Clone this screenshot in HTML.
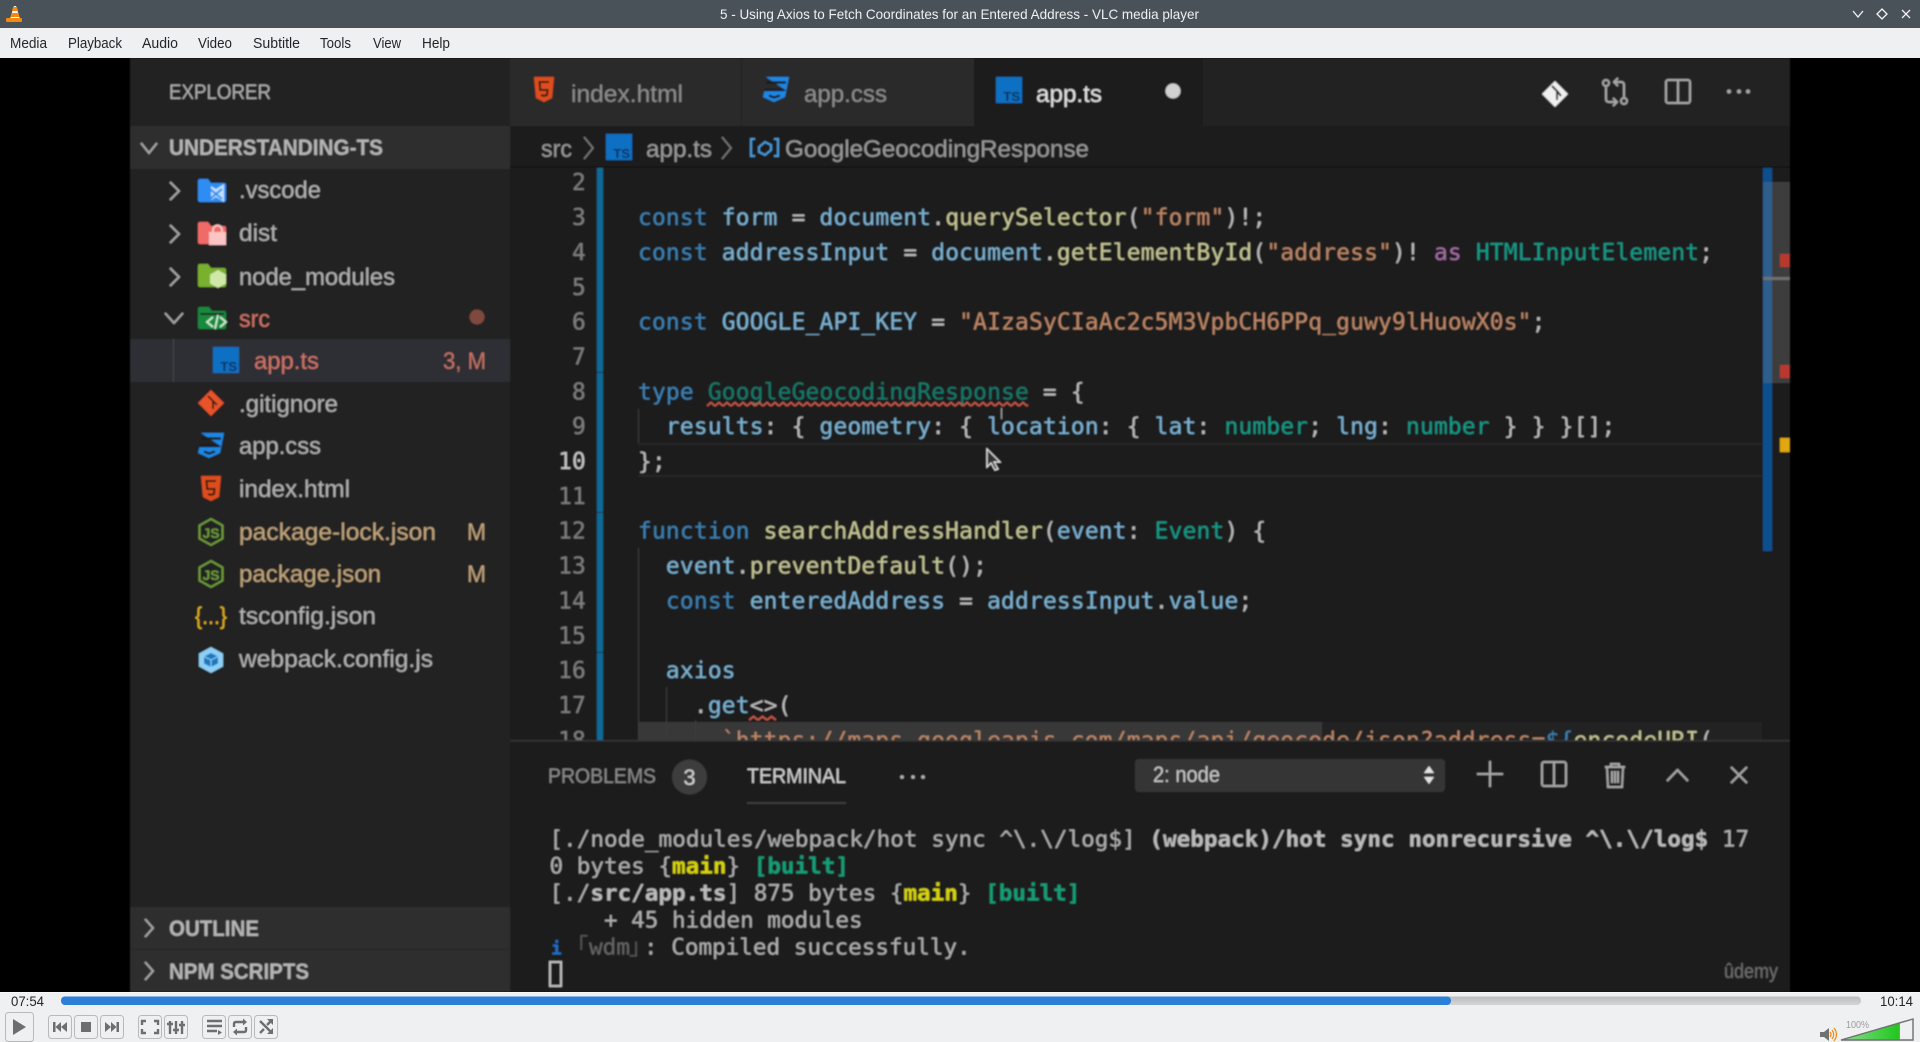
<!DOCTYPE html>
<html lang="en"><head><meta charset="utf-8"><title>VLC media player</title>
<style>
html,body{margin:0;padding:0;width:1920px;height:1042px;overflow:hidden;background:#eff0f1}
svg{display:block;position:absolute;left:0;top:0}
text{white-space:pre}
.ui{font-family:"Liberation Sans",sans-serif}
.m{font-family:"DejaVu Sans Mono","Liberation Mono",monospace;font-size:22.87px;letter-spacing:.2px}
.t{font-family:"DejaVu Sans Mono","Liberation Mono","Noto Sans CJK JP",monospace;font-size:22.62px;fill:#b0b0b0}
.ln{text-anchor:end;fill:#7f7f7f}
.f{font-family:"Liberation Sans",sans-serif;font-size:24px;fill:#b2b2b2}
.k{fill:#3d82b4}.v{fill:#7db4d4}.fn{fill:#c6c696}.s{fill:#bd8768}.ty{fill:#159b89}.p{fill:#bdbdbd}
.menu{font-family:"Liberation Sans",sans-serif;font-size:15px;fill:#232629}
.btn{fill:#eff0f1;stroke:#b9babb;stroke-width:1}
.ic{fill:#6d6e6f}
.ics{fill:none;stroke:#6d6e6f;stroke-width:2.4}
.w{fill:none;stroke:#a8a8a8;stroke-width:2}
</style></head>
<body>
<svg width="1920" height="1042" viewBox="0 0 1920 1042" xmlns="http://www.w3.org/2000/svg">
<defs>
<filter id="b" filterUnits="userSpaceOnUse" x="0" y="58" width="1920" height="934"><feGaussianBlur stdDeviation="0.8"/></filter>
<pattern id="sq" patternUnits="userSpaceOnUse" width="8" height="7" x="707" y="401"><path d="M0 5 L4 1.5 L8 5" fill="none" stroke="#c8584a" stroke-width="1.6"/></pattern>
<pattern id="sq2" patternUnits="userSpaceOnUse" width="9" height="7" x="749" y="715"><path d="M0 5 L4.5 1.5 L9 5" fill="none" stroke="#c8584a" stroke-width="1.8"/></pattern>
<linearGradient id="vol" x1="0" x2="1" y1="0" y2="0"><stop offset="0" stop-color="#8fdc8f"/><stop offset=".97" stop-color="#1fc81f"/><stop offset="1" stop-color="#8cae10"/></linearGradient>
<linearGradient id="track" x1="0" x2="0" y1="0" y2="1"><stop offset="0" stop-color="#bcbdbe"/><stop offset="1" stop-color="#d4d5d6"/></linearGradient>
<g id="ts"><rect width="26" height="26" fill="#0b6fc2"/><text x="24" y="24" text-anchor="end" class="ui" font-size="13" font-weight="bold" fill="#0c2f55">TS</text></g>
<g id="html5"><path d="M0 0H20L18 21L10 25L2 21Z" fill="#df4d1f"/><path d="M15 5H5.5L6.2 13H13.5L13 18L10 19L7 18" fill="none" stroke="#2a1a14" stroke-width="2"/></g>
<g id="css3"><path d="M3 0H26L22 20L11 25L0 20L1.5 14H24" fill="#1e88e5"/><path d="M3 5.5H23M1.5 13H21M6 18.5L11 20.5L17 18.5" stroke="#1f1f1f" stroke-width="2.4" fill="none"/></g>
<g id="js"><path d="M0-13L11.5-6.5V6.5L0 13L-11.5 6.5V-6.5Z" fill="none" stroke="#6d9c3a" stroke-width="2"/><text x="0" y="6" text-anchor="middle" class="ui" font-size="14" font-weight="bold" fill="#6d9c3a">JS</text></g>
</defs>

<!-- VIDEO -->
<rect x="0" y="58" width="1920" height="934" fill="#000"/>
<g filter="url(#b)">
<!-- sidebar -->
<rect x="130" y="58" width="380" height="934" fill="#212121"/>
<text x="169" y="99" class="ui" font-size="21" fill="#aeaeae" textLength="102" lengthAdjust="spacingAndGlyphs">EXPLORER</text>
<rect x="130" y="126" width="380" height="43" fill="#2e2e2e"/>
<path d="M141 143L149 153L157 143" class="w"/>
<text x="169" y="155" class="ui" font-size="22" font-weight="bold" fill="#b5b5b5" textLength="214" lengthAdjust="spacingAndGlyphs">UNDERSTANDING-TS</text>

<path d="M170 182L179 191L170 200M170 225L179 234L170 243M170 268L179 277L170 286" class="w"/>
<path d="M165 313L174 323L183 313" class="w"/>
<!-- folders -->
<path d="M198 181a2 2 0 0 1 2-2h8l3 4h13a2 2 0 0 1 2 2v15a2 2 0 0 1-2 2h-24a2 2 0 0 1-2-2z" fill="#2e8df2"/>
<path d="M216 189l8-5v18l-8-5-5 3v-14z" fill="#bfe0ff"/><path d="M210 189l12 10M210 199l12-10" stroke="#2e8df2" stroke-width="2"/>
<path d="M198 224a2 2 0 0 1 2-2h8l3 4h13a2 2 0 0 1 2 2v14a2 2 0 0 1-2 2h-24a2 2 0 0 1-2-2z" fill="#f06a68"/>
<rect x="209" y="232" width="17" height="13" fill="#fcc5c5"/><path d="M213 232v-2a4 4 0 0 1 9 0v2" fill="none" stroke="#fcc5c5" stroke-width="2"/>
<path d="M198 266a2 2 0 0 1 2-2h8l3 4h13a2 2 0 0 1 2 2v15a2 2 0 0 1-2 2h-24a2 2 0 0 1-2-2z" fill="#79b02f"/>
<path d="M218 270l8 4.5v9l-8 4.5-8-4.5v-9z" fill="#cfe8a8"/>
<path d="M198 309a2 2 0 0 1 2-2h9l3 4h12a2 2 0 0 1 2 2v14a2 2 0 0 1-2 2h-24a2 2 0 0 1-2-2z" fill="#128a3c"/>
<rect x="200" y="313" width="24" height="2" fill="#222"/>
<path d="M213 317l-6 5 6 5M220 317l6 5-6 5M218 315l-3 14" fill="none" stroke="#cdeed6" stroke-width="1.8"/>
<!-- rows -->
<text x="239" y="198" class="f" textLength="82" lengthAdjust="spacingAndGlyphs">.vscode</text>
<text x="239" y="241" class="f" textLength="38" lengthAdjust="spacingAndGlyphs">dist</text>
<text x="239" y="285" class="f" textLength="156" lengthAdjust="spacingAndGlyphs">node_modules</text>
<text x="239" y="327" class="f" style="fill:#cf7568" textLength="31" lengthAdjust="spacingAndGlyphs">src</text>
<circle cx="477" cy="317" r="7.5" fill="#7f4a40"/>
<rect x="130" y="339" width="380" height="43" fill="#2f2f34"/>
<rect x="173" y="339" width="1" height="43" fill="#4a4a4a"/>
<use href="#ts" x="213" y="347"/>
<text x="254" y="369" class="f" style="fill:#cf7568" textLength="65" lengthAdjust="spacingAndGlyphs">app.ts</text>
<text x="443" y="369" class="f" style="fill:#c27365" textLength="43" lengthAdjust="spacingAndGlyphs">3, M</text>
<path d="M211 390l13 13-13 13-13-13z" fill="#e9532b"/><path d="M208 396l5 5v8M213 401l4 4" stroke="#221" stroke-width="1.8" fill="none"/>
<text x="239" y="412" class="f" textLength="99" lengthAdjust="spacingAndGlyphs">.gitignore</text>
<use href="#css3" x="198" y="433"/>
<text x="239" y="454" class="f" textLength="82" lengthAdjust="spacingAndGlyphs">app.css</text>
<use href="#html5" x="201" y="476"/>
<text x="239" y="497" class="f" textLength="111" lengthAdjust="spacingAndGlyphs">index.html</text>
<use href="#js" x="211" y="532"/>
<text x="239" y="540" class="f" style="fill:#c2a57c" textLength="197" lengthAdjust="spacingAndGlyphs">package-lock.json</text>
<text x="467" y="540" class="f" style="fill:#c2a57c" textLength="19" lengthAdjust="spacingAndGlyphs">M</text>
<use href="#js" x="211" y="574"/>
<text x="239" y="582" class="f" style="fill:#c2a57c" textLength="142" lengthAdjust="spacingAndGlyphs">package.json</text>
<text x="467" y="582" class="f" style="fill:#c2a57c" textLength="19" lengthAdjust="spacingAndGlyphs">M</text>
<text x="195" y="624" class="ui" font-size="24" fill="#e6b41e" textLength="32" lengthAdjust="spacingAndGlyphs">{...}</text>
<text x="239" y="624" class="f" textLength="137" lengthAdjust="spacingAndGlyphs">tsconfig.json</text>
<path d="M211 647l12 6.5v13l-12 6.5-12-6.5v-13z" fill="#8ed0f5"/><path d="M211 653l7 3.5v7l-7 3.5-7-3.5v-7z" fill="#1c78c0"/><path d="M204 656.500l7 3.500 7-3.500M211 660v7" fill="none" stroke="#8ed0f5" stroke-width="1"/>
<text x="239" y="667" class="f" textLength="194" lengthAdjust="spacingAndGlyphs">webpack.config.js</text>
<rect x="130" y="907" width="380" height="43" fill="#2d2d2d"/>
<rect x="130" y="950" width="380" height="42" fill="#2d2d2d"/>
<rect x="130" y="949" width="380" height="1" fill="#262626"/>
<path d="M145 919l8 9-8 9M145 962l8 9-8 9" class="w"/>
<text x="169" y="936" class="ui" font-size="22" font-weight="bold" fill="#b5b5b5" textLength="90" lengthAdjust="spacingAndGlyphs">OUTLINE</text>
<text x="169" y="979" class="ui" font-size="22" font-weight="bold" fill="#b5b5b5" textLength="140" lengthAdjust="spacingAndGlyphs">NPM SCRIPTS</text>

<!-- tabs -->
<rect x="510" y="58" width="1280" height="68" fill="#212121"/>
<rect x="510" y="58" width="231" height="68" fill="#2a2a2a"/>
<rect x="742" y="58" width="232" height="68" fill="#2a2a2a"/>
<rect x="974" y="58" width="229" height="68" fill="#1c1c1c"/>
<use href="#html5" x="534" y="77"/>
<text x="571" y="102" class="ui" font-size="24" fill="#8d8d8d" textLength="112" lengthAdjust="spacingAndGlyphs">index.html</text>
<use href="#css3" x="763" y="77"/>
<text x="804" y="102" class="ui" font-size="24" fill="#8d8d8d" textLength="83" lengthAdjust="spacingAndGlyphs">app.css</text>
<use href="#ts" x="996" y="77"/>
<text x="1036" y="102" class="ui" font-size="24" fill="#e4e4e4" textLength="66" lengthAdjust="spacingAndGlyphs">app.ts</text>
<circle cx="1173" cy="91" r="7.5" fill="#d0d0d0"/>
<!-- top-right icons -->
<path d="M1555 81l13 13-13 13-13-13z" fill="#f0f0f0"/><path d="M1552 86l5 5v9M1557 91l4 5" stroke="#222" stroke-width="2" fill="none"/>
<g class="w"><circle cx="1606" cy="83" r="3"/><circle cx="1624" cy="101" r="3"/><path d="M1606 87v12q0 3 3 3h8M1613 98l4 4-4 4M1624 97v-12q0-3-3-3h-6M1618 78l-4 4 4 4" fill="none"/>
<rect x="1666" y="80" width="24" height="23" rx="2"/><path d="M1678 80v23"/></g>
<g fill="#a8a8a8"><circle cx="1729" cy="91.500" r="2"/><circle cx="1739" cy="91.500" r="2"/><circle cx="1748" cy="91.500" r="2"/></g>

<!-- breadcrumb -->
<rect x="510" y="126" width="1280" height="42" fill="#1c1c1c"/>
<rect x="510" y="166" width="1280" height="3" fill="#161616"/>
<text x="541" y="157" class="ui" font-size="24" fill="#9a9a9a" textLength="31" lengthAdjust="spacingAndGlyphs">src</text>
<path d="M584 137l9 11-9 11M722 137l9 11-9 11" fill="none" stroke="#7d7d7d" stroke-width="1.5"/>
<use href="#ts" x="606" y="134"/>
<text x="646" y="157" class="ui" font-size="24" fill="#9a9a9a" textLength="66" lengthAdjust="spacingAndGlyphs">app.ts</text>
<path d="M755 139h-4v17h4M774 139h4v17h-4" fill="none" stroke="#4a9ad8" stroke-width="2"/>
<path d="M759 147l6-5 6 3v5l-6 5-6-3z" fill="none" stroke="#4a9ad8" stroke-width="2"/>
<text x="785" y="157" class="ui" font-size="24" fill="#9a9a9a" textLength="304" lengthAdjust="spacingAndGlyphs">GoogleGeocodingResponse</text>

<!-- editor -->
<rect x="510" y="168" width="1280" height="572" fill="#1c1c1c"/>
<rect x="597" y="168" width="6" height="572" fill="#0b6b97"/>
<rect x="597" y="372" width="6" height="1" fill="#1c1c1c"/><rect x="597" y="512" width="6" height="1" fill="#1c1c1c"/><rect x="597" y="652" width="6" height="1" fill="#1c1c1c"/>
<rect x="638" y="443" width="1124" height="2" fill="#262626"/><rect x="638" y="475" width="1124" height="2" fill="#262626"/>
<rect x="638" y="722" width="684" height="18" fill="#383838"/>
<rect x="1322" y="722" width="440" height="18" fill="#242424"/>
<g fill="#3a3a3a"><rect x="638" y="409" width="1" height="34"/><rect x="638" y="548" width="1" height="192"/><rect x="666" y="687" width="1" height="53"/><rect x="695" y="720" width="1" height="20"/></g>
<g class="m">
<text class="ln" x="586" y="190.2">2</text>
<text class="ln" x="586" y="225.1">3</text>
<text class="ln" x="586" y="260">4</text>
<text class="ln" x="586" y="294.8">5</text>
<text class="ln" x="586" y="329.7">6</text>
<text class="ln" x="586" y="364.500">7</text>
<text class="ln" x="586" y="399.300">8</text>
<text class="ln" x="586" y="434.200">9</text>
<text class="ln" x="586" y="469" style="fill:#c8c8c8">10</text>
<text class="ln" x="586" y="503.900">11</text>
<text class="ln" x="586" y="538.700">12</text>
<text class="ln" x="586" y="573.600">13</text>
<text class="ln" x="586" y="608.400">14</text>
<text class="ln" x="586" y="643.300">15</text>
<text class="ln" x="586" y="678.100">16</text>
<text class="ln" x="586" y="713">17</text>
<text class="ln" x="586" y="747.800">18</text>

<text x="638" y="225.1" xml:space="preserve"><tspan class="k">const</tspan><tspan class="v"> form </tspan><tspan class="p">=</tspan><tspan class="v"> document</tspan><tspan class="p">.</tspan><tspan class="fn">querySelector</tspan><tspan class="p">(</tspan><tspan class="s">"form"</tspan><tspan class="p">)!;</tspan></text>
<text x="638" y="260" xml:space="preserve"><tspan class="k">const</tspan><tspan class="v"> addressInput </tspan><tspan class="p">=</tspan><tspan class="v"> document</tspan><tspan class="p">.</tspan><tspan class="fn">getElementById</tspan><tspan class="p">(</tspan><tspan class="s">"address"</tspan><tspan class="p">)! </tspan><tspan fill="#a56ea5">as</tspan><tspan class="ty"> HTMLInputElement</tspan><tspan class="p">;</tspan></text>
<text x="638" y="329.7" xml:space="preserve"><tspan class="k">const</tspan><tspan class="v"> GOOGLE_API_KEY </tspan><tspan class="p">= </tspan><tspan class="s">"AIzaSyCIaAc2c5M3VpbCH6PPq_guwy9lHuowX0s"</tspan><tspan class="p">;</tspan></text>
<text x="638" y="399.300" xml:space="preserve"><tspan class="k">type</tspan><tspan fill="#157a6c"> GoogleGeocodingResponse</tspan><tspan class="p"> = {</tspan></text>
<text x="638" y="434.200" xml:space="preserve"><tspan class="v">  results</tspan><tspan class="p">: { </tspan><tspan class="v">geometry</tspan><tspan class="p">: { </tspan><tspan class="v">location</tspan><tspan class="p">: { </tspan><tspan class="v">lat</tspan><tspan class="p">: </tspan><tspan class="ty">number</tspan><tspan class="p">; </tspan><tspan class="v">lng</tspan><tspan class="p">: </tspan><tspan class="ty">number</tspan><tspan class="p"> } } }[];</tspan></text>
<text x="638" y="469" class="p" xml:space="preserve">};</text>
<text x="638" y="538.700" xml:space="preserve"><tspan class="k">function</tspan><tspan class="fn"> searchAddressHandler</tspan><tspan class="p">(</tspan><tspan class="v">event</tspan><tspan class="p">: </tspan><tspan class="ty">Event</tspan><tspan class="p">) {</tspan></text>
<text x="638" y="573.600" xml:space="preserve"><tspan class="v">  event</tspan><tspan class="p">.</tspan><tspan class="fn">preventDefault</tspan><tspan class="p">();</tspan></text>
<text x="638" y="608.400" xml:space="preserve"><tspan class="k">  const</tspan><tspan class="v"> enteredAddress </tspan><tspan class="p">=</tspan><tspan class="v"> addressInput</tspan><tspan class="p">.</tspan><tspan class="v">value</tspan><tspan class="p">;</tspan></text>
<text x="638" y="678.100" xml:space="preserve"><tspan class="v">  axios</tspan></text>
<text x="638" y="713" xml:space="preserve"><tspan class="p">    .</tspan><tspan class="v">get</tspan><tspan class="p">&lt;&gt;(</tspan></text>
<text x="638" y="747.800" xml:space="preserve"><tspan class="s">      `https://maps.googleapis.com/maps/api/geocode/json?address=</tspan><tspan class="k">${</tspan><tspan class="fn">encodeURI</tspan><tspan class="p">(</tspan></text>
</g>
<rect x="707" y="401" width="321" height="7" fill="url(#sq)"/>
<rect x="749" y="715" width="27" height="7" fill="url(#sq2)"/>
<rect x="1001" y="408" width="1" height="11" fill="#aaa"/>
<!-- scrollbar -->
<rect x="1763" y="168" width="9" height="383" fill="#0a4f8e"/>
<rect x="1763" y="182" width="27" height="201" fill="#3c3c3c"/>
<rect x="1763" y="182" width="9" height="201" fill="#2f5f8c"/>
<rect x="1763" y="277" width="27" height="3" fill="#707070"/>
<rect x="1780" y="254" width="10" height="13" fill="#b8392f"/>
<rect x="1780" y="365" width="10" height="13" fill="#b8392f"/>
<rect x="1780" y="438" width="10" height="14" fill="#e0a80f"/>
<!-- mouse -->
<path d="M987 449l13 13-6 0 4 7-3 1-4-7-4 4z" fill="#333" stroke="#e8e8e8" stroke-width="1.200"/>

<!-- panel -->
<rect x="510" y="740" width="1280" height="252" fill="#1b1b1b"/>
<rect x="510" y="740" width="1280" height="1.500" fill="#363636"/>
<text x="548" y="783" class="ui" font-size="21" fill="#8b8b8b" textLength="108" lengthAdjust="spacingAndGlyphs">PROBLEMS</text>
<circle cx="689.500" cy="777" r="17.500" fill="#3e3e3e"/>
<text x="689.500" y="785" text-anchor="middle" class="ui" font-size="22" fill="#d4d4d4">3</text>
<text x="747" y="783" class="ui" font-size="21" fill="#d4d4d4" textLength="99" lengthAdjust="spacingAndGlyphs">TERMINAL</text>
<rect x="747" y="802" width="99" height="2" fill="#3c3c3c"/>
<g fill="#b8b8b8"><circle cx="902" cy="777" r="1.800"/><circle cx="913" cy="777" r="1.800"/><circle cx="923" cy="777" r="1.800"/></g>
<rect x="1135" y="759" width="310" height="33" rx="4" fill="#353535"/>
<text x="1153" y="782" class="ui" font-size="22" fill="#c8c8c8" textLength="67" lengthAdjust="spacingAndGlyphs">2: node</text>
<path d="M1429 766l5 7h-10zM1429 784l5-7h-10z" fill="#e4e4e4"/>
<g class="w"><path d="M1490 761v26M1477 774h26"/>
<rect x="1542" y="762" width="24" height="24" rx="2"/><path d="M1554 762v24"/>
<path d="M1605 767h20M1611 767v-3h8v3M1607 767l1 20h14l1-20M1612 771v12M1615 771v12M1618 771v12"/>
<path d="M1667 781l10.500-11 10.500 11M1731 767l16 16M1747 767l-16 16"/></g>

<!-- terminal -->
<g class="t">
<text x="549.500" y="846.500" xml:space="preserve" letter-spacing=".02">[./node_modules/webpack/hot sync ^\.\/log$] <tspan font-weight="bold" fill="#bcbcbc">(webpack)/hot sync nonrecursive ^\.\/log$</tspan> 17</text>
<text x="549.500" y="873.500" xml:space="preserve">0 bytes {<tspan font-weight="bold" fill="#d8d40a">main</tspan>} <tspan font-weight="bold" fill="#149e78">[built]</tspan></text>
<text x="549.500" y="900.500" xml:space="preserve">[./<tspan font-weight="bold" fill="#bcbcbc">src/app.ts</tspan>] 875 bytes {<tspan font-weight="bold" fill="#d8d40a">main</tspan>} <tspan font-weight="bold" fill="#149e78">[built]</tspan></text>
<text x="549.500" y="927.500" xml:space="preserve">    + 45 hidden modules</text>
<text x="551" y="954.500" font-weight="bold" style="fill:#1a6fc4" font-size="18">i</text>
<text x="577" y="954.500" style="fill:#555">｢</text>
<text x="589" y="954.500" style="fill:#666" textLength="41" lengthAdjust="spacingAndGlyphs">wdm</text>
<text x="629" y="954.500" style="fill:#555">｣</text>
<text x="644" y="954.500" xml:space="preserve">: Compiled successfully.</text>
</g>
<rect x="550" y="962" width="11" height="24" fill="none" stroke="#c0c0c0" stroke-width="2"/>
<text x="1724" y="978" class="ui" font-size="20" fill="#6f6f6f" textLength="54" lengthAdjust="spacingAndGlyphs">ûdemy</text>
</g>

<!-- TITLE BAR -->
<rect x="0" y="0" width="1920" height="28" fill="#4a5259"/>
<path d="M14 6h2l4 13h-10z" fill="#fff"/><path d="M13 7h4l1 4h-6zM11.500 13h7l1 4h-9z" fill="#f5890f"/><rect x="6" y="18" width="16" height="4" rx="1" fill="#f5890f"/>
<text x="720" y="19" class="ui" font-size="14" fill="#eff0f1" textLength="479" lengthAdjust="spacingAndGlyphs">5 - Using Axios to Fetch Coordinates for an Entered Address - VLC media player</text>
<path d="M1853 11l5 6 5-6M1882 9l5 5-5 5-5-5zM1902 10l8 8M1910 10l-8 8" fill="none" stroke="#f5f5f5" stroke-width="1.300"/>

<!-- MENU -->
<rect x="0" y="28" width="1920" height="30" fill="#eff0f1"/>
<g class="menu">
<text x="10" y="48" textLength="37" lengthAdjust="spacingAndGlyphs">Media</text>
<text x="68" y="48" textLength="54" lengthAdjust="spacingAndGlyphs">Playback</text>
<text x="142" y="48" textLength="36" lengthAdjust="spacingAndGlyphs">Audio</text>
<text x="198" y="48" textLength="34" lengthAdjust="spacingAndGlyphs">Video</text>
<text x="253" y="48" textLength="47" lengthAdjust="spacingAndGlyphs">Subtitle</text>
<text x="320" y="48" textLength="31" lengthAdjust="spacingAndGlyphs">Tools</text>
<text x="373" y="48" textLength="28" lengthAdjust="spacingAndGlyphs">View</text>
<text x="422" y="48" textLength="28" lengthAdjust="spacingAndGlyphs">Help</text>
</g>

<!-- CONTROLS -->
<rect x="0" y="992" width="1920" height="50" fill="#eff0f1"/>
<rect x="0" y="992" width="1920" height="1" fill="#f8f8f8"/>
<rect x="61" y="996.500" width="1800" height="8.500" rx="4" fill="url(#track)"/>
<rect x="61" y="996.500" width="1390" height="8.500" rx="4" fill="#2b7fd6"/>
<text x="11" y="1006" class="ui" font-size="14" fill="#232629" textLength="33" lengthAdjust="spacingAndGlyphs">07:54</text>
<text x="1880" y="1006" class="ui" font-size="14" fill="#232629" textLength="33" lengthAdjust="spacingAndGlyphs">10:14</text>

<rect x="5.500" y="1012.500" width="28" height="29" rx="3" class="btn"/>
<path d="M13 1019l13 8-13 8z" class="ic"/>
<rect x="48.500" y="1015.500" width="23" height="23" rx="3" class="btn"/>
<path d="M53 1022h2.500v10h-2.500zM55.500 1027l5.500-5v10zM61 1027l6-5v10z" class="ic"/>
<rect x="74.500" y="1015.500" width="23" height="23" rx="3" class="btn"/>
<rect x="81" y="1022" width="10" height="10" class="ic"/>
<rect x="100.500" y="1015.500" width="23" height="23" rx="3" class="btn"/>
<path d="M105 1022l6 5-6 5zM111 1022l5.500 5-5.500 5zM116.500 1022h2.500v10h-2.500z" class="ic"/>
<rect x="138.500" y="1015.500" width="23" height="23" rx="3" class="btn"/>
<path d="M142 1025v-4h4M154 1021h4v4M158 1029v4h-4M146 1033h-4v-4" class="ics"/>
<rect x="164.500" y="1015.500" width="23" height="23" rx="3" class="btn"/>
<path d="M170 1021v13M176 1021v13M182 1021v13" class="ics"/>
<path d="M167 1024h6M173 1030h6M179 1025h6" stroke="#6d6e6f" stroke-width="2.500"/>
<rect x="202.500" y="1015.500" width="23" height="23" rx="3" class="btn"/>
<path d="M207 1021h15M207 1026h15M207 1031h10" class="ics"/><path d="M218 1030l4 2.500-4 2.500z" class="ic"/>
<rect x="228.500" y="1015.500" width="23" height="23" rx="3" class="btn"/>
<path d="M234 1027v-3q0-2 2-2h9M246 1027v3q0 2-2 2h-9" class="ics"/><path d="M243 1018.500l4 3.500-4 3.500zM237 1028.500l-4 3.500 4 3.500z" class="ic"/>
<rect x="254.500" y="1015.500" width="23" height="23" rx="3" class="btn"/>
<path d="M260 1021l11 11M260 1033l4-4M267 1025l4-4" class="ics"/><path d="M267 1019h6v6zM267 1034h6v-6z" class="ic"/>

<!-- volume -->
<path d="M1820 1032h4l5-4v13l-5-4h-4z" fill="#707172"/>
<path d="M1830 1032q2 2.500 0 5M1832 1030q3.500 4.500 0 9M1834 1028q5 6.500 0 13" fill="none" stroke="#f08a10" stroke-width="1.200"/>
<path d="M1841 1040L1913 1019V1040z" fill="#eff0f1"/>
<path d="M1841 1040L1900 1023V1040z" fill="url(#vol)"/>
<path d="M1841 1040L1913 1019V1040z" fill="none" stroke="#6f7071" stroke-width="1.400"/>
<text x="1846" y="1028" class="ui" font-size="10" fill="#9a9b9c" textLength="23" lengthAdjust="spacingAndGlyphs">100%</text>
</svg>
</body></html>
